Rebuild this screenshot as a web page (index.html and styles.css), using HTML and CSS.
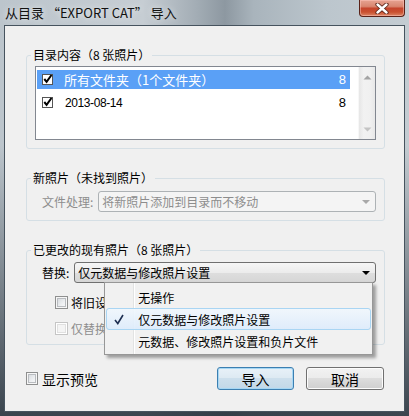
FILE: index.html
```html
<!DOCTYPE html>
<html lang="zh-CN">
<head>
<meta charset="utf-8">
<title>从目录导入</title>
<link rel="stylesheet" href="styles.css">
</head>
<body>
<div class="window">
  <div class="titlebar">
    <span class="title">从目录 “EXPORT CAT” 导入</span>
    <div class="close">
      <svg width="14" height="11" viewBox="0 0 14 11"><path d="M2.5 1.5 L11.5 9.5 M11.5 1.5 L2.5 9.5" stroke="#5a2418" stroke-width="4.2" stroke-linecap="round"/><path d="M2.5 1.5 L11.5 9.5 M11.5 1.5 L2.5 9.5" stroke="#fff" stroke-width="2.4" stroke-linecap="round"/></svg>
    </div>
  </div>
  <div class="client">
    <fieldset class="group g1">
      <legend>目录内容（8 张照片）</legend>
      <div class="listbox">
        <div class="rows">
          <div class="row selected">
            <svg class="lcb" width="11" height="11" viewBox="0 0 11 11"><rect x="0.5" y="0.5" width="10" height="10" fill="#fff" stroke="#555"/><path d="M2.3 5 L4.6 7.8 L9.5 1" stroke="#000" stroke-width="2" fill="none"/></svg>
            <span class="rtext">所有文件夹（1个文件夹）</span>
            <span class="rcount">8</span>
          </div>
          <div class="row">
            <svg class="lcb" width="11" height="11" viewBox="0 0 11 11"><rect x="0.5" y="0.5" width="10" height="10" fill="#fff" stroke="#555"/><path d="M2.3 5 L4.6 7.8 L9.5 1" stroke="#000" stroke-width="2" fill="none"/></svg>
            <span class="rtext date">2013-08-14</span>
            <span class="rcount">8</span>
          </div>
        </div>
        <div class="scrollbar">
          <svg width="9" height="5" viewBox="0 0 9 5"><path d="M0.5 4.5 L4.5 0.5 L8.5 4.5 Z" fill="#a4a4a4"/></svg>
          <svg width="9" height="5" viewBox="0 0 9 5"><path d="M0.5 0.5 L4.5 4.5 L8.5 0.5 Z" fill="#c4c4c4"/></svg>
        </div>
      </div>
    </fieldset>

    <fieldset class="group g2">
      <legend>新照片（未找到照片）</legend>
      <div class="field">
        <span class="flabel disabled">文件处理:</span>
        <div class="combo disabled">
          <span class="ctext">将新照片添加到目录而不移动</span>
          <svg width="8" height="4" viewBox="0 0 8 4"><path d="M0 0 L8 0 L4 4 Z" fill="#a8a8a8"/></svg>
        </div>
      </div>
    </fieldset>

    <fieldset class="group g3">
      <legend>已更改的现有照片（8 张照片）</legend>
      <div class="field">
        <span class="flabel">替换:</span>
        <div class="combo">
          <span class="ctext">仅元数据与修改照片设置</span>
          <svg width="8" height="4" viewBox="0 0 8 4"><path d="M0 0 L8 0 L4 4 Z" fill="#000"/></svg>
          <div class="menu">
            <div class="mitem"><span class="gutter"></span><span>无操作</span></div>
            <div class="mitem hot"><span class="gutter"><svg width="10" height="11" viewBox="0 0 10 11"><path d="M1 6 L3.8 9.5 L9 1" stroke="#1e2f52" stroke-width="1.6" fill="none"/></svg></span><span>仅元数据与修改照片设置</span></div>
            <div class="mitem"><span class="gutter"></span><span>元数据、修改照片设置和负片文件</span></div>
          </div>
        </div>
      </div>
      <div class="check c1"><span class="cb"></span><span>将旧设置保留为虚拟副本</span></div>
      <div class="check c2 disabled"><span class="cb"></span><span>仅替换非原始文件</span></div>
    </fieldset>

    <div class="bottom">
      <div class="check preview"><span class="cb"></span><span>显示预览</span></div>
      <div class="buttons">
        <button class="btn default">导入</button>
        <button class="btn">取消</button>
      </div>
    </div>
  </div>
</div>
</body>
</html>
```

FILE: styles.css
```css
* { box-sizing: border-box; }
html, body { margin: 0; padding: 0; }
body {
  width: 409px;
  height: 416px;
  overflow: hidden;
  font-family: "Noto Sans CJK SC", "Liberation Sans", sans-serif;
  color: #000;
}
.window {
  width: 409px;
  height: 416px;
  display: flex;
  flex-direction: column;
  background:
    linear-gradient(180deg, rgba(30,40,50,0) 0%, rgba(30,40,50,0) 35%, rgba(35,45,55,0.85) 100%),
    linear-gradient(90deg, #bcc5cc 0%, #c6cdd3 35%, #a3adb5 48%, #8d98a1 55%, #a9b4bc 62%, #bcc6cd 80%, #c4ccd2 100%);
}
.titlebar {
  height: 25px;
  display: flex;
  align-items: flex-start;
  flex: none;
}
.title {
  padding: 4px 0 0 5px;
  font-size: 13px;
  line-height: 17px;
  color: #111;
  text-shadow: 0 0 6px rgba(255,255,255,0.8);
  white-space: pre;
}
.close {
  margin-left: auto;
  margin-right: 4px;
  width: 46px;
  height: 17px;
  border: 1px solid #5a2218;
  border-top: none;
  border-radius: 0 0 4px 4px;
  background: linear-gradient(180deg, #e6a392 0%, #d98670 40%, #c5452d 52%, #c9502f 75%, #db8565 100%);
  box-shadow: inset 0 0 0 1px rgba(255,200,190,0.5);
  display: flex;
  align-items: center;
  justify-content: center;
}
.client {
  flex: 1;
  margin: 0 4px 4px 4px;
  border: 1px solid #46535e;
  background: #f0f0f0;
  padding: 21px 19px 0 21px;
  display: flex;
  flex-direction: column;
}
.group {
  margin: 0;
  min-width: 0;
  border: 1px solid #d5dfe5;
  border-radius: 3px;
  padding: 3px 8px 8px 8px;
}
.group legend {
  font-size: 12px;
  line-height: 16px;
  padding: 0 2px;
  margin-left: -4px;
}
.g2, .g3 { margin-top: 21px; }
.g2 { padding-top: 5px; }
.g3 { padding-top: 4px; padding-bottom: 6px; }

.listbox {
  height: 74px;
  border: 1px solid #828790;
  background: #fff;
  display: flex;
}
.rows {
  flex: 1;
  padding: 3px 8px 0 1px;
}
.row {
  height: 19px;
  margin-bottom: 4px;
  display: flex;
  align-items: center;
  padding: 0 4px 0 5px;
  font-size: 13px;
}
.row.selected { background: #5aa0f6; color: #fff; }
.lcb { flex: none; }
.rtext { margin-left: 11px; flex: 1; }
.rtext.date { font-family: "Liberation Sans", sans-serif; font-size: 12px; letter-spacing: -0.4px; margin-left: 12px; }
.rcount { font-family: "Liberation Sans", sans-serif; font-size: 13px; }
.scrollbar {
  width: 17px;
  flex: none;
  background: linear-gradient(90deg, #e6e6e6 0%, #f2f2f2 30%, #f0f0f0 70%, #e8e8e8 100%);
  border-left: 1px solid #f7f7f7;
  display: flex;
  flex-direction: column;
  justify-content: space-between;
  align-items: center;
  padding: 8px 0 7px 0;
}

.field {
  display: flex;
  align-items: center;
  padding-left: 7px;
}
.flabel { font-size: 12px; line-height: 16px; margin-right: 5px; }
.flabel.disabled { color: #8d8d8d; }
.combo {
  position: relative;
  flex: 1;
  height: 21px;
  border: 1px solid #707070;
  border-radius: 3px;
  background: linear-gradient(180deg, #f6f6f6 0%, #ececec 50%, #dedede 51%, #d6d6d6 100%);
  display: flex;
  align-items: center;
  padding: 0 5px 0 3px;
  font-size: 12px;
}
.combo.disabled {
  border-color: #adb2b5;
  background: #f4f4f4;
  color: #8d8d8d;
}
.ctext { flex: 1; line-height: 16px; }

.menu {
  position: absolute;
  left: 29px;
  top: 100%;
  width: 269px;
  height: 73px;
  z-index: 5;
  border: 1px solid #979797;
  background: linear-gradient(90deg, #f1f1f1 0px, #f1f1f1 28px, #e2e3e3 28px, #e2e3e3 29px, #ffffff 29px, #ffffff 30px, #f1f1f1 30px);
  box-shadow: 3px 3px 3px rgba(0,0,0,0.35);
  padding-top: 3px;
  color: #000;
}
.mitem {
  height: 22px;
  margin: 0 1px;
  border: 1px solid transparent;
  border-radius: 3px;
  display: flex;
  align-items: center;
  font-size: 12px;
}
.mitem.hot {
  border-color: #a9d5f3;
  background: linear-gradient(180deg, rgba(240,247,253,0.9), rgba(221,236,252,0.9));
}
.gutter {
  width: 31px;
  flex: none;
  display: flex;
  justify-content: center;
  padding-right: 7px;
}

.check {
  display: flex;
  align-items: center;
  font-size: 12px;
  height: 20px;
}
.c1 { margin: 9px 0 0 20px; }
.c2 { margin: 6px 0 0 20px; }
.cb {
  width: 13px;
  height: 13px;
  flex: none;
  border: 1px solid #8e8f8f;
  background: linear-gradient(135deg, #cfd3d8 0%, #eef0f2 60%, #fbfbfb 100%);
  box-shadow: inset 0 0 0 1px #f6f6f6, inset 0 0 0 2px #b9bcc0;
  margin-right: 3px;
}
.check.disabled { color: #8d8d8d; }
.check.disabled .cb {
  border-color: #c5c5c5;
  background: #f4f4f4;
  box-shadow: inset 0 0 0 1px #fff, inset 0 0 0 2px #e0e0e0;
}

.bottom {
  margin-top: 22px;
  display: flex;
  align-items: center;
  justify-content: space-between;
  padding-right: 1px;
}
.check.preview { font-size: 14px; height: 23px; }
.check.preview .cb { margin-right: 4px; width: 12px; height: 13px; }
.buttons { display: flex; gap: 12px; }
.btn {
  width: 77px;
  height: 23px;
  border: 1px solid #707070;
  border-radius: 3px;
  background: linear-gradient(180deg, #f2f2f2 0%, #ebebeb 49%, #dddddd 50%, #cfcfcf 100%);
  box-shadow: inset 0 0 0 1px #fcfcfc;
  font-family: "Noto Sans CJK SC", sans-serif;
  font-size: 14px;
  line-height: 18px;
  padding: 0;
  color: #000;
}
.btn + .btn { width: 78px; }
.btn.default {
  border-color: #3c7fb1;
  background: linear-gradient(180deg, #e8f1f8 0%, #dde9f2 49%, #cddfec 50%, #c2d8e8 100%);
  box-shadow: inset 0 0 0 1px #a6d7f4;
}
```
